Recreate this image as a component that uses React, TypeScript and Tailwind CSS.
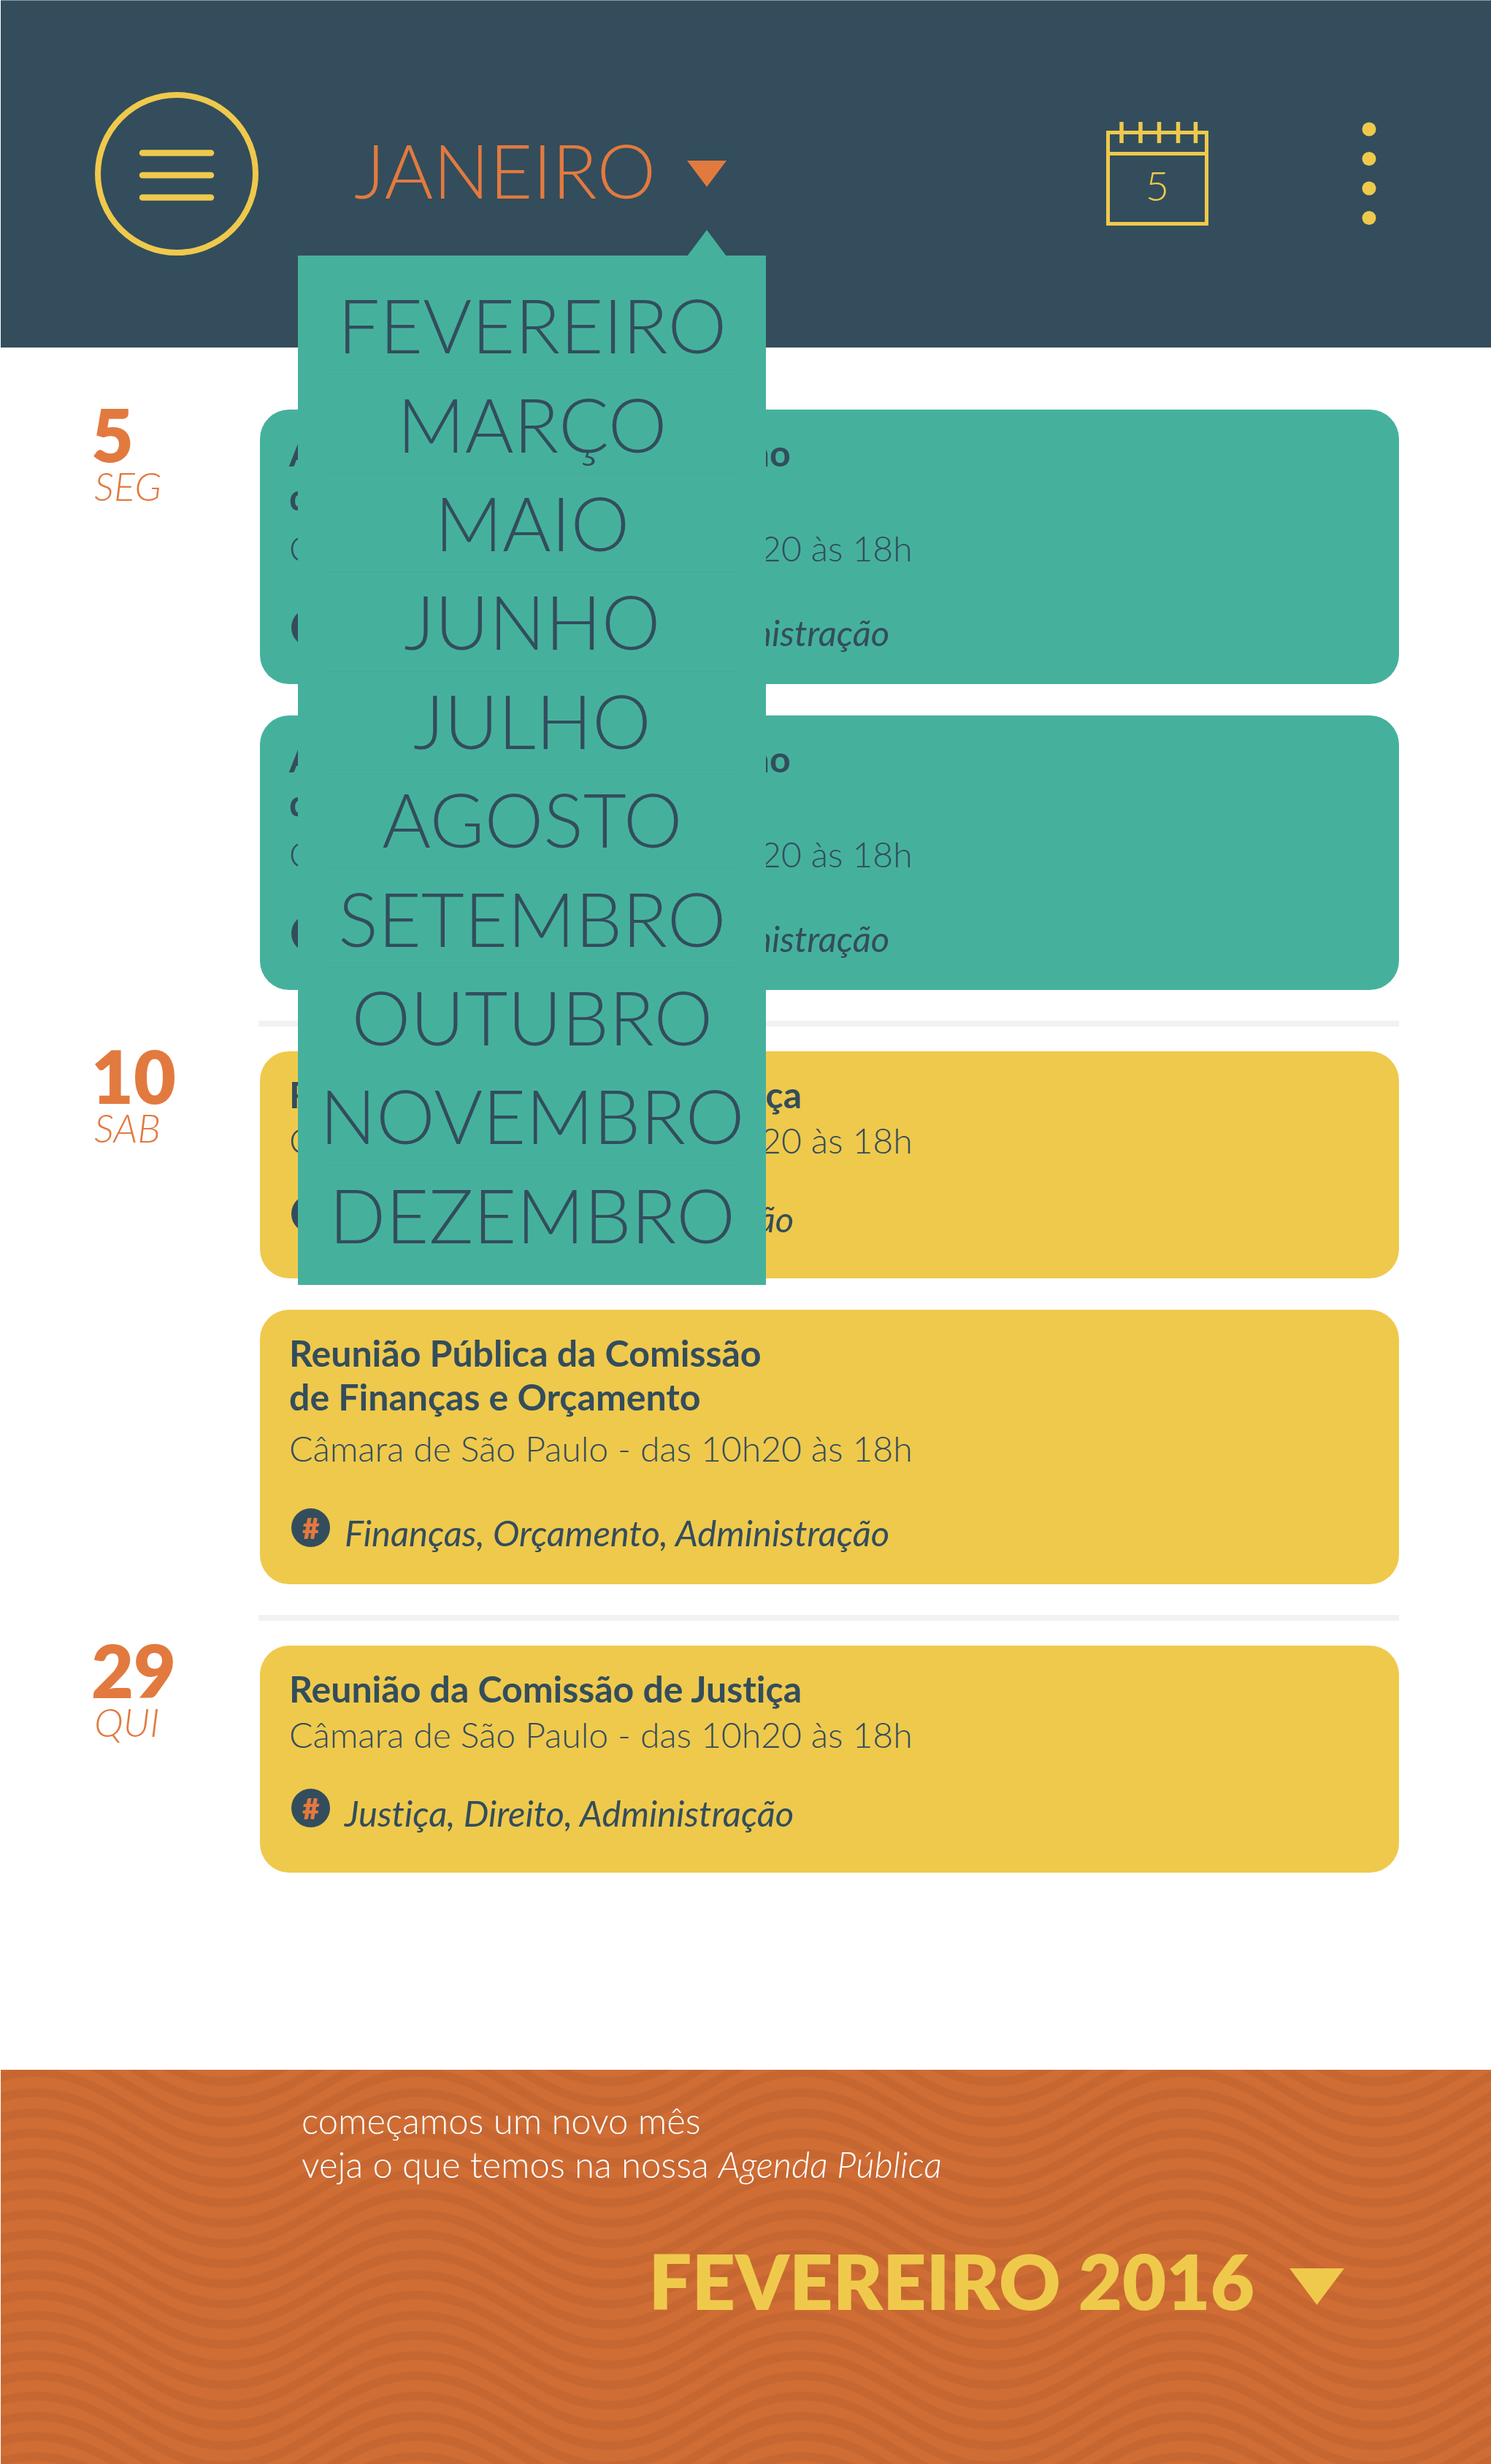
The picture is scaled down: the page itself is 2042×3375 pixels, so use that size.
import { ReactNode } from "react";

const MONTHS = [
  "FEVEREIRO",
  "MARÇO",
  "MAIO",
  "JUNHO",
  "JULHO",
  "AGOSTO",
  "SETEMBRO",
  "OUTUBRO",
  "NOVEMBRO",
  "DEZEMBRO",
];

type Meeting = {
  title: string[];
  place: string;
  tags: string;
  tone: "green" | "yellow";
};

type Day = { day: string; weekday: string; meetings: Meeting[] };

const PLACE = "Câmara de São Paulo - das 10h20 às 18h";
const FINANCE_TAGS = "Finanças, Orçamento, Administração";
const JUSTICE_TAGS = "Justiça, Direito, Administração";

const DAYS: Day[] = [
  {
    day: "5",
    weekday: "SEG",
    meetings: [
      {
        title: ["Audiência Pública da Comissão", "de Finanças e Orçamento"],
        place: PLACE,
        tags: FINANCE_TAGS,
        tone: "green",
      },
      {
        title: ["Audiência Pública da Comissão", "de Finanças e Orçamento"],
        place: PLACE,
        tags: FINANCE_TAGS,
        tone: "green",
      },
    ],
  },
  {
    day: "10",
    weekday: "SAB",
    meetings: [
      {
        title: ["Reunião da Comissão de Justiça"],
        place: PLACE,
        tags: JUSTICE_TAGS,
        tone: "yellow",
      },
      {
        title: ["Reunião Pública da Comissão", "de Finanças e Orçamento"],
        place: PLACE,
        tags: FINANCE_TAGS,
        tone: "yellow",
      },
    ],
  },
  {
    day: "29",
    weekday: "QUI",
    meetings: [
      {
        title: ["Reunião da Comissão de Justiça"],
        place: PLACE,
        tags: JUSTICE_TAGS,
        tone: "yellow",
      },
    ],
  },
];

function MenuIcon() {
  return (
    <svg width="224" height="224" viewBox="0 0 224 224" fill="none" stroke="#efc94c" aria-hidden="true">
      <circle cx="112" cy="112" r="108" strokeWidth="8" />
      <path d="M65 83.5H159M65 114H159M65 144.5H159" strokeWidth="8.5" strokeLinecap="round" />
    </svg>
  );
}

function CalendarIcon({ children }: { children: ReactNode }) {
  return (
    <svg width="140" height="142" viewBox="0 0 140 142" fill="none" stroke="#efc94c" strokeWidth="5" aria-hidden="true">
      <rect x="2.5" y="14.5" width="135" height="125" />
      <path d="M2 43.5H138" />
      <path d="M21 0V29M47 0V29M72.500 0V29M98.500 0V29M122.500 0V29" strokeWidth="5.500" />
      <text
        x="70"
        y="107.500"
        textAnchor="middle"
        fill="#efc94c"
        stroke="none"
        className="font-light text-[56px]"
      >
        {children}
      </text>
    </svg>
  );
}

function DotsIcon() {
  return (
    <svg width="20" height="142" viewBox="0 0 20 142" fill="#efc94c" aria-hidden="true">
      <circle cx="10" cy="10" r="9.5" />
      <circle cx="10" cy="50.500" r="9.5" />
      <circle cx="10" cy="91" r="9.5" />
      <circle cx="10" cy="131.500" r="9.5" />
    </svg>
  );
}

function MonthMenu() {
  return (
    <div className="absolute top-full right-[-54px] z-10 mt-[47px] w-[641px] bg-[#45b19d] py-7">
      <svg
        width="54"
        height="36"
        viewBox="0 0 54 36"
        fill="#45b19d"
        className="absolute right-[54px] bottom-full -mb-px"
        aria-hidden="true"
      >
        <path d="M27 0L54 36H0Z" />
      </svg>
      <ul className="mx-9 grid h-[1354px] auto-rows-fr grid-cols-1 divide-y divide-[#43aa97]">
        {MONTHS.map((month) => (
          <li key={month} className="flex items-center justify-center">
            <button type="button" className="whitespace-nowrap text-[102px] leading-[120px] font-light text-[#334d5c]">
              {month}
            </button>
          </li>
        ))}
      </ul>
    </div>
  );
}

function Header() {
  return (
    <header className="flex h-[476px] items-center border-t border-[#8d9ba4] bg-[#334d5c] pr-[157px] pb-px pl-[129px]">
      <button type="button" aria-label="Menu" className="shrink-0">
        <MenuIcon />
      </button>
      <div className="relative ml-[131px]">
        <button type="button" aria-expanded="true" className="flex items-center gap-[43px] text-[#e27a3f]">
          <span className="pb-[10px] text-[102px] leading-[120px] font-light">JANEIRO</span>
          <svg width="54" height="36" viewBox="0 0 54 36" fill="currentColor" aria-hidden="true">
            <path d="M0 0H54L27 36Z" />
          </svg>
        </button>
        <MonthMenu />
      </div>
      <button type="button" aria-label="Hoje, dia 5" className="ml-auto shrink-0">
        <CalendarIcon>5</CalendarIcon>
      </button>
      <button type="button" aria-label="Mais opções" className="ml-[210px] shrink-0">
        <DotsIcon />
      </button>
    </header>
  );
}

function MeetingCard({ meeting }: { meeting: Meeting }) {
  const long = meeting.title.length > 1;
  return (
    <article
      className={`rounded-[40px] px-10 pt-[29px] leading-[60px] text-[#334d5c] ${
        meeting.tone === "green" ? "bg-[#45b19d]" : "bg-[#efc94c]"
      } ${long ? "pb-[41px]" : "pb-[52px]"}`}
    >
      <h3 className="text-[50px] font-bold">
        {meeting.title.map((line) => (
          <span key={line} className="block">
            {line}
          </span>
        ))}
      </h3>
      <p className={`text-[48px] font-light ${long ? "mt-[11px]" : "mt-[3px]"}`}>{meeting.place}</p>
      <div className={`flex items-start gap-5 ${long ? "mt-[52px]" : "mt-11"}`}>
        <span className="ml-[3px] flex size-[53px] shrink-0 items-center justify-center rounded-full bg-[#334d5c] text-[40px] font-extrabold text-[#e27a3f]">
          #
        </span>
        <p className="mt-[3px] text-[49px] italic">{meeting.tags}</p>
      </div>
    </article>
  );
}

function DaySection({ day }: { day: Day }) {
  return (
    <section className="flex">
      <h2 className="w-[233px] shrink-0 pl-0.5 text-[#e27a3f]">
        <span className="block text-[100px] leading-[66px] font-extrabold">{day.day}</span>
        <span className="mt-3 block pl-1 text-[54px] leading-[54px] font-light italic">{day.weekday}</span>
      </h2>
      <div className="flex flex-1 flex-col gap-[43px]">
        {day.meetings.map((meeting, index) => (
          <MeetingCard key={index} meeting={meeting} />
        ))}
      </div>
    </section>
  );
}

const WAVE_STEP = 27.7;
const WAVES = Array.from({ length: 25 }, (_, i) => (i - 4) * WAVE_STEP);

function Waves() {
  return (
    <svg className="absolute inset-0 size-full" aria-hidden="true">
      <defs>
        <pattern
          id="waves"
          width="525"
          height={WAVE_STEP * 20}
          patternUnits="userSpaceOnUse"
          patternTransform="translate(46 3.600)"
        >
          {WAVES.map((y) => (
            <path
              key={y}
              transform={`translate(0 ${y})`}
              d="M-262 96C-162 96 -104 0 0 0C104 0 162 96 262.500 96C363 96 421 0 525 0C629 0 687 96 787 96"
              fill="none"
              stroke="#c66732"
              strokeWidth="12"
            />
          ))}
        </pattern>
      </defs>
      <rect width="100%" height="100%" fill="url(#waves)" />
    </svg>
  );
}

function Footer() {
  return (
    <footer className="relative bg-[#cf6d34] pt-[39px] pr-[201px] pb-[199px] pl-[412px]">
      <Waves />
      <div className="relative">
        <p className="text-[49px] leading-[60px] font-light text-white">
          começamos um novo mês
          <br />
          veja o que temos na nossa <em>Agenda Pública</em>
        </p>
        <button type="button" className="mt-[77px] ml-auto flex items-center gap-12 text-[#efc94c]">
          <span className="text-[104px] leading-[106px] font-extrabold">FEVEREIRO 2016</span>
          <svg width="75" height="50" viewBox="0 0 75 50" fill="currentColor" className="mt-4" aria-hidden="true">
            <path d="M0 0H75L37.500 50Z" />
          </svg>
        </button>
      </div>
    </footer>
  );
}

export default function App() {
  return (
    <div className="border-l border-white bg-white pb-0.5 font-['Lato',sans-serif] [font-variant-ligatures:no-common-ligatures]">
      <Header />
      <main className="pt-[85px] pr-[126px] pb-[270px] pl-[122px]">
        {DAYS.map((day, index) => (
          <div key={day.day}>
            {index > 0 && <hr className="mt-[42px] mb-[34px] ml-[231px] h-2 border-0 bg-[#f2f2f2]" />}
            <DaySection day={day} />
          </div>
        ))}
      </main>
      <Footer />
    </div>
  );
}
